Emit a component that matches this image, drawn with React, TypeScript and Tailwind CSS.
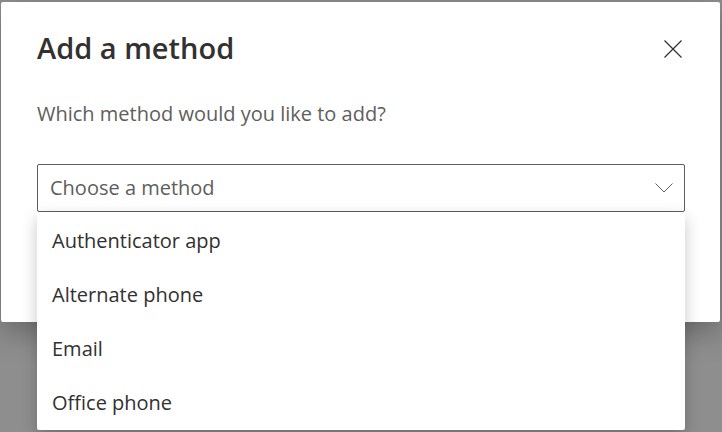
import { useState } from 'react';

const methods = ['Authenticator app', 'Alternate phone', 'Email', 'Office phone'];

export default function App() {
  const [open, setOpen] = useState(true);

  return (
    <div
      className="relative w-[722px] h-[432px] overflow-hidden bg-[#8e8e8e] pt-[2px] pl-[1px] pr-[2px]"
      style={{ fontFamily: '"Open Sans", "Noto Sans", sans-serif' }}
    >
      {/* Dialog */}
      <div className="h-[320px] bg-white rounded-[2px] shadow-[0_10px_30px_rgba(0,0,0,0.28)] pl-[36px] pr-[35px] pt-[26px]">
        <div className="flex items-start justify-between">
          <h1 className="text-[29px] leading-[40px] font-semibold text-[#323130]">Add a method</h1>
          <button className="mt-[11px] mr-[2px] text-[#323130]" aria-label="Close">
            <svg width="20" height="20" viewBox="0 0 20 20" fill="none" stroke="currentColor" strokeWidth="1.2">
              <path d="M1.5 1.5 L18.5 18.5 M18.5 1.5 L1.5 18.5" />
            </svg>
          </button>
        </div>

        <p className="mt-[33px] text-[20px] leading-[26px] text-[#605e5c]">Which method would you like to add?</p>

        {/* Select */}
        <div className="relative mt-[37px]">
          <button
            onClick={() => setOpen(!open)}
            className="flex w-full h-[48px] items-center justify-between border border-[#605e5c] rounded-[2px] pl-[12px] pr-[11px] text-left"
          >
            <span className="text-[20px] text-[#605e5c]">Choose a method</span>
            <svg width="18" height="10" viewBox="0 0 18 10" fill="none" stroke="#605e5c" strokeWidth="1">
              <path d="M0.5 0.5 L9 9 L17.5 0.5" />
            </svg>
          </button>

          {open && (
            <ul className="absolute left-0 right-0 top-full bg-white rounded-b-[2px] pt-[2px] shadow-[0_6px_16px_rgba(0,0,0,0.22)] z-10">
              {methods.map((m) => (
                <li
                  key={m}
                  className="h-[54px] flex items-center pl-[15px] text-[20px] text-[#323130] cursor-pointer hover:bg-[#f3f2f1]"
                >
                  {m}
                </li>
              ))}
            </ul>
          )}
        </div>
      </div>
    </div>
  );
}
